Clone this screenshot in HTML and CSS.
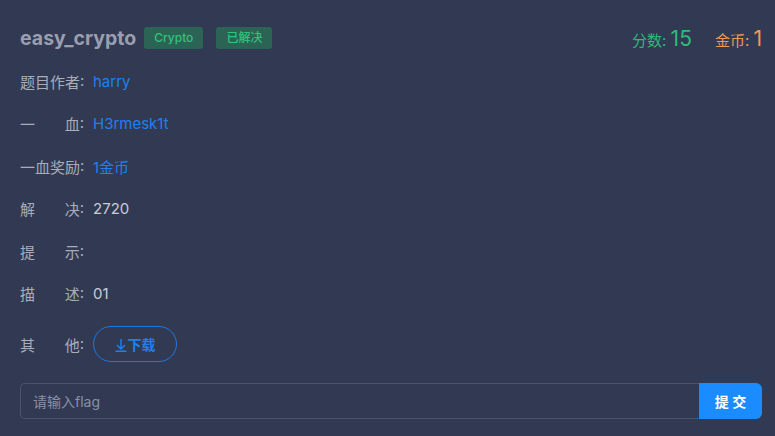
FILE: index.html
```html
<!DOCTYPE html>
<html lang="zh">
<head>
<meta charset="utf-8">
<link rel="stylesheet" href="styles.css">
</head>
<body>
<div class="panel">
  <div class="header">
    <div class="title-group">
      <span class="title">easy_crypto</span>
      <span class="tag">Crypto</span>
      <span class="tag">已解决</span>
    </div>
    <div class="stats">
      <span class="score">分数: <b>15</b></span>
      <span class="coin">金币: <b>1</b></span>
    </div>
  </div>
  <div class="rows">
    <div class="row"><span class="label"><span class="lt">题目作者</span>:</span><span class="link">harry</span></div>
    <div class="row"><span class="label"><span class="lt">一 血</span>:</span><span class="link">H3rmesk1t</span></div>
    <div class="row"><span class="label"><span class="lt">一血奖励</span>:</span><span class="link">1金币</span></div>
    <div class="row"><span class="label"><span class="lt">解 决</span>:</span><span class="value">2720</span></div>
    <div class="row"><span class="label"><span class="lt">提 示</span>:</span><span class="value"></span></div>
    <div class="row"><span class="label"><span class="lt">描 述</span>:</span><span class="value">01</span></div>
    <div class="row row-btn"><span class="label"><span class="lt">其 他</span>:</span><button class="dl"><svg class="ico" width="12" height="14" viewBox="0 0 12 14"><path d="M6 1 V11 M2 7 L6 11 L10 7 M0.5 13.3 H11.5" fill="none" stroke="currentColor" stroke-width="1.4"/></svg>下载</button></div>
  </div>
  <div class="submit">
    <input class="flag" type="text" placeholder="请输入flag">
    <button class="go">提 交</button>
  </div>
</div>
</body>
</html>
```
FILE: styles.css
```css
html, body {
  margin: 0;
  padding: 0;
  background: #313a52;
  font-family: Inter, "Noto Sans CJK SC", sans-serif;
}
.panel {
  width: 775px;
  height: 436px;
  box-sizing: border-box;
  padding: 22px 13px 0 20px;
}
.header {
  display: flex;
  justify-content: space-between;
  align-items: center;
  height: 32px;
}
.title-group {
  display: flex;
  align-items: center;
}
.title {
  color: #9a9eb0;
  font-size: 19.5px;
  font-weight: 700;
  margin-right: 8px;
}
.tag {
  background: #2b6455;
  color: #2fc37c;
  font-size: 12px;
  font-weight: 500;
  height: 22px;
  line-height: 22px;
  padding: 0 10px;
  border-radius: 3px;
  margin-right: 13px;
}
.stats {
  display: flex;
  align-items: baseline;
  gap: 23px;
  font-size: 15px;
}
.stats b {
  font-weight: 400;
  font-size: 21px;
}
.score { color: #2fbb7a; }
.coin { color: #ee9a52; }
.rows {
  display: flex;
  flex-direction: column;
  margin-top: 6px;
}
.row {
  display: flex;
  align-items: center;
  height: 42.5px;
  font-size: 15px;
}
.row-btn { height: 58px; }
.label {
  display: flex;
  width: 64px;
  margin-right: 9px;
  color: #a9adbb;
  white-space: nowrap;
}
.lt {
  width: 60px;
  text-align: justify;
  text-align-last: justify;
}
.link { color: #1f80f0; }
.value { color: #c9ccd6; }
.dl {
  display: flex;
  align-items: center;
  justify-content: center;
  gap: 1px;
  height: 36px;
  width: 84px;
  border: 1px solid #1f78e0;
  border-radius: 18px;
  background: transparent;
  color: #1f80f0;
  font-family: Inter, "Noto Sans CJK SC", sans-serif;
  font-size: 14px;
  font-weight: 700;
  padding: 0;
}
.ico { margin-top: 1px; }
.submit {
  display: flex;
  margin-top: 10px;
  width: 742px;
  height: 36px;
}
.flag {
  flex: 1;
  box-sizing: border-box;
  height: 36px;
  background: transparent;
  border: 1px solid #4a5270;
  border-right: none;
  border-radius: 5px 0 0 5px;
  padding: 0 12px;
  color: #c9ccd6;
  font-family: Inter, "Noto Sans CJK SC", sans-serif;
  font-size: 14px;
  outline: none;
}
.flag::placeholder { color: #8a90a6; }
.go {
  width: 63px;
  height: 36px;
  border: none;
  background: #1a8cff;
  color: #fff;
  border-radius: 0 6px 6px 0;
  font-family: Inter, "Noto Sans CJK SC", sans-serif;
  font-size: 14px;
  font-weight: 700;
  padding: 0;
}
```
